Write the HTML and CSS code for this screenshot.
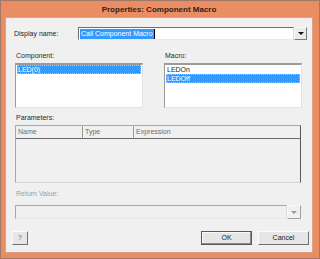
FILE: index.html
```html
<!DOCTYPE html>
<html>
<head>
<meta charset="utf-8">
<link rel="stylesheet" href="styles.css">
</head>
<body>
<div class="window">
  <div class="title">Properties: Component Macro</div>
  <div class="client">
    <div class="row-display">
      <span class="lbl-display">Display name:</span>
      <div class="combo-edit"><span class="sel">Call Component Macro</span><span class="caret"></span></div>
      <div class="drop"><span class="tri"></span></div>
    </div>
    <div class="lists">
      <div class="col col-comp">
        <div class="lbl">Component:</div>
        <div class="listbox comp">
          <div class="item selected">LED(0)</div>
        </div>
      </div>
      <div class="col col-macro">
        <div class="lbl">Macro:</div>
        <div class="listbox macro">
          <div class="item">LEDOn</div>
          <div class="item selected">LEDOff</div>
        </div>
      </div>
    </div>
    <div class="lbl lbl-params">Parameters:</div>
    <div class="table">
      <div class="thead">
        <div class="th th-name">Name</div>
        <div class="th th-type">Type</div>
        <div class="th th-expr">Expression</div>
      </div>
    </div>
    <div class="lbl lbl-return">Return Value:</div>
    <div class="combo-disabled">
      <div class="cd-field"></div>
      <div class="drop drop-dis"><span class="tri tri-dis"></span></div>
    </div>
    <div class="buttons">
      <button class="btn btn-help">?</button>
      <div class="spacer"></div>
      <button class="btn btn-ok">OK</button>
      <button class="btn btn-cancel">Cancel</button>
    </div>
  </div>
</div>
</body>
</html>
```

FILE: styles.css
```css
* { box-sizing: border-box; }
html, body { margin: 0; padding: 0; }
body {
  width: 320px;
  height: 259px;
  font-family: "Liberation Sans", Arial, sans-serif;
  font-size: 7px;
  color: #1e1e1e;
  background: #ffffff;
}
.window {
  width: 320px;
  height: 259px;
  background: #ea8d63;
  border: 1px solid #a07a68;
  padding: 0 6px 5px 4px;
  display: flex;
  flex-direction: column;
}
.title {
  height: 16px;
  line-height: 17px;
  text-align: center;
  font-weight: bold;
  font-size: 8px;
  color: #2e221c;
}
.client {
  flex: 1;
  background: #f0f0f0;
  border: 1px solid #d7a487;
  display: flex;
  flex-direction: column;
  padding: 0 0 0 9px;
}
.row-display {
  margin-top: 9px;
  height: 13px;
  display: flex;
  align-items: center;
}
.lbl-display {
  width: 64px;
  margin-left: -1px;
}
.combo-edit {
  width: 216px;
  height: 13px;
  background: #fff;
  border: 1px solid;
  border-color: #6e6e6e #dcdcdc #e8e8e8 #6e6e6e;
  padding: 1px 0 0 1px;
  display: flex;
  align-items: flex-start;
}
.sel {
  background: #3399ff;
  color: #fff;
  line-height: 9px;
  height: 10px;
  padding: 0 1px 0 1px;
}
.caret {
  width: 1px;
  height: 10px;
  background: #000;
}
.drop {
  width: 13px;
  height: 13px;
  background: #ebebeb;
  border: 1px solid;
  border-color: #f8f8f8 #7a7a7a #7a7a7a #f8f8f8;
  display: flex;
  align-items: center;
  justify-content: center;
}
.tri {
  width: 0;
  height: 0;
  border-left: 3px solid transparent;
  border-right: 3px solid transparent;
  border-top: 3px solid #111;
}
.lists {
  margin-top: 12px;
  display: flex;
}
.col { display: flex; flex-direction: column; }
.col-comp { width: 128px; }
.col-macro { width: 138px; margin-left: 21px; }
.lbl {
  height: 8px;
  line-height: 8px;
  color: #2a2a2a;
  margin-left: 1px;
}
.listbox {
  margin-top: 3px;
  height: 45px;
  background: #fff;
  border: 1px solid;
  border-color: #9a9a9a #e2e2e2 #e2e2e2 #9a9a9a;
  border-top-width: 2px;
  padding: 0 1px;
}
.item {
  height: 9px;
  line-height: 9px;
  padding-left: 1px;
  color: #1e1e1e;
}
.item.selected {
  background: #3399ff;
  color: #fff;
  outline: 1px dotted #99ccff;
  outline-offset: -1px;
}
.lbl-params {
  margin-top: 6px;
}
.table {
  margin-top: 3px;
  width: 286px;
  height: 58px;
  border: 1px solid;
  border-color: #a8a8a8 #5a5a5a #d4d4d4 #a8a8a8;
  background: #f0f0f0;
}
.thead {
  display: flex;
  height: 13px;
  border-bottom: 1px solid #6a6a6a;
}
.th {
  height: 12px;
  line-height: 12px;
  color: #6d6d6d;
  padding-left: 2px;
  border-right: 1px solid #9a9a9a;
}
.th-name { width: 67px; }
.th-type { width: 51px; }
.th-expr { flex: 1; border-right: none; }
.lbl-return {
  margin-top: 7px;
  color: #a0a0a0;
}
.combo-disabled {
  margin-top: 7px;
  width: 286px;
  height: 14px;
  display: flex;
}
.cd-field {
  flex: 1;
  height: 14px;
  border: 1px solid;
  border-color: #a8a8a8 #dcdcdc #e8e8e8 #a8a8a8;
  background: #f0f0f0;
}
.drop-dis {
  width: 14px;
  height: 14px;
  background: #f0f0f0;
  border-color: #fafafa #a0a0a0 #a0a0a0 #fafafa;
}
.tri-dis { border-top-color: #9a9a9a; }
.buttons {
  margin-top: 12px;
  display: flex;
  height: 14px;
  margin-left: -3px;
  padding-right: 3px;
}
.spacer { flex: 1; }
.btn {
  font-family: "Liberation Sans", Arial, sans-serif;
  font-size: 7px;
  color: #222;
  height: 14px;
  padding: 0;
  margin: 0;
  background: #e6e6e6;
  border: 1px solid;
  border-color: #fbfbfb #6f6f6f #6f6f6f #fbfbfb;
  line-height: 12px;
}
.btn-help { width: 16px; color: #6a5aa8; }
.btn-ok {
  width: 51px;
  border: 1px solid #5a5a5a;
  box-shadow: inset -1px -1px 0 #8a8a8a, inset 1px 1px 0 #fbfbfb;
}
.btn-cancel { width: 51px; margin-left: 6px; }
```
